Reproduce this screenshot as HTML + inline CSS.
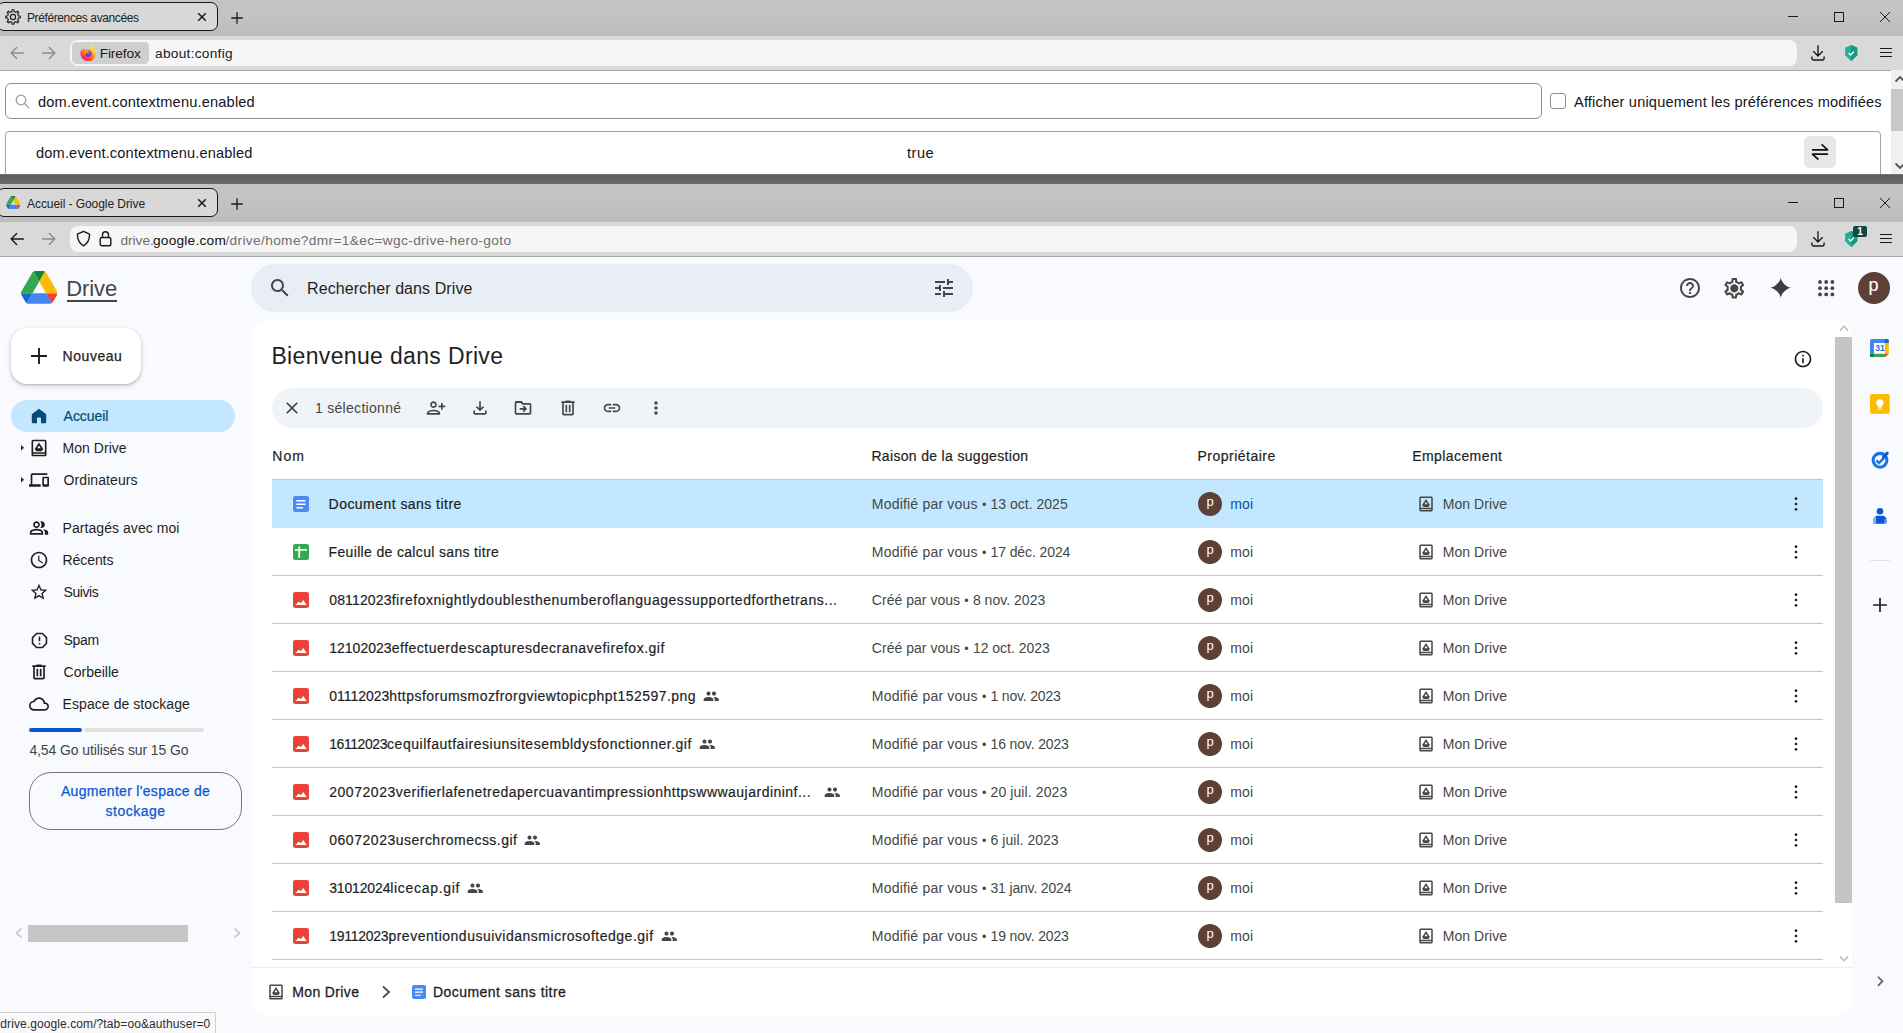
<!DOCTYPE html>
<html lang="fr"><head><meta charset="utf-8"><title>Accueil - Google Drive</title>
<style>
html,body{margin:0;padding:0;}
body{width:1903px;height:1033px;overflow:hidden;position:relative;background:#f8fafd;font-family:"Liberation Sans", sans-serif;}
.t{position:absolute;white-space:nowrap;}
.i{position:absolute;display:block;}
.b{position:absolute;box-sizing:border-box;}
</style></head>
<body>
<div class="b" style="left:0px;top:0px;width:1903px;height:36px;background:linear-gradient(#c5c5c5 0,#c3c3c3 40%,#bcbcbc 100%);"></div>
<div class="b" style="left:-3px;top:2px;width:221px;height:29px;background:#d8d8d8;border:1.5px solid #161616;border-radius:7px;"></div>
<svg class="i" style="left:5px;top:8.8px" width="16" height="16" viewBox="0 0 16 16"><path d="M6.88 2.61 L7.09 0.76 L8.91 0.76 L9.12 2.61 L11.02 3.40 L12.47 2.23 L13.77 3.53 L12.60 4.98 L13.39 6.88 L15.24 7.09 L15.24 8.91 L13.39 9.12 L12.60 11.02 L13.77 12.47 L12.47 13.77 L11.02 12.60 L9.12 13.39 L8.91 15.24 L7.09 15.24 L6.88 13.39 L4.98 12.60 L3.53 13.77 L2.23 12.47 L3.40 11.02 L2.61 9.12 L0.76 8.91 L0.76 7.09 L2.61 6.88 L3.40 4.98 L2.23 3.53 L3.53 2.23 L4.98 3.40Z" stroke="#222" stroke-width="1.200" fill="none" stroke-linejoin="round"/><circle cx="8" cy="8" r="2.600" stroke="#222" stroke-width="1.200" fill="none"/></svg>
<div class="t" style="left:27.00px;top:9.8px;font-size:12px;line-height:17px;color:#222;font-weight:400;letter-spacing:-0.390px;">Préférences avancées</div>
<svg class="i" style="left:197px;top:12px" width="10" height="10" viewBox="0 0 10 10"><path d="M1.2 1.2L8.8 8.8M8.8 1.2L1.2 8.8" stroke="#1a1a1a" stroke-width="1.5" fill="none"/></svg>
<svg class="i" style="left:229.5px;top:10.5px" width="14" height="14" viewBox="0 0 14 14"><path d="M7 1.200v11.600M1.200 7h11.600" stroke="#1a1a1a" stroke-width="1.300" fill="none"/></svg>
<div class="b" style="left:1788px;top:16px;width:10px;height:1px;background:#1a1a1a;"></div>
<div class="b" style="left:1834px;top:12px;width:10px;height:10px;border:1px solid #1a1a1a;"></div>
<svg class="i" style="left:1880px;top:12px" width="10" height="10" viewBox="0 0 10 10"><path d="M0 0L10 10M10 0L0 10" stroke="#1a1a1a" stroke-width="1" fill="none"/></svg>
<div class="b" style="left:0px;top:36px;width:1903px;height:35px;background:#d9d9d9;border-bottom:1px solid #a6a6a6;"></div>
<svg class="i" style="left:10px;top:46px" width="14" height="14" viewBox="0 0 14 14"><path d="M13.5 7H1.2M6.6 1.6L1.2 7 6.6 12.4" stroke="#8c8c8c" stroke-width="1.4" fill="none" stroke-linejoin="round" stroke-linecap="round"/></svg>
<svg class="i" style="left:42px;top:46px" width="14" height="14" viewBox="0 0 14 14"><path d="M0.5 7H12.8M7.4 1.6L12.8 7 7.4 12.400" stroke="#8c8c8c" stroke-width="1.4" fill="none" stroke-linejoin="round" stroke-linecap="round"/></svg>
<div class="b" style="left:70px;top:40px;width:1727px;height:26px;background:#f6f6f6;border-radius:8px;"></div>
<div class="b" style="left:72.2px;top:42px;width:76.6px;height:22px;background:#cfcfcf;border-radius:4.5px;"></div><svg class="i" style="left:79.7px;top:44.9px" width="16.3" height="16.3" viewBox="0 0 16 16"><defs><linearGradient id="fxa" x1="85%" y1="8%" x2="22%" y2="95%"><stop offset="0" stop-color="#fff44f"/><stop offset=".28" stop-color="#ffc22f"/><stop offset=".52" stop-color="#ff7d1a"/><stop offset=".78" stop-color="#ff3a4f"/><stop offset="1" stop-color="#ea237c"/></linearGradient><radialGradient id="fxb" cx="62%" cy="28%" r="85%"><stop offset="0" stop-color="#b44dff"/><stop offset=".55" stop-color="#6a3fe0"/><stop offset="1" stop-color="#4638cf"/></radialGradient></defs><path d="M10.400 0C12 1.500 13.200 2.600 14.400 4.600C16.200 7.600 15.800 11.400 13.400 13.800C10.600 16.600 5.900 16.700 3 14C0 11.200-.3 7 1.600 4C1.700 4.800 2 5.300 2.400 5.700C2.500 4.400 3 3.400 3.900 2.600C4.100 3.600 4.600 4.200 5.400 4.600C6.800 4.200 8.400 4.400 9.600 5.200C9 3.400 9.400 1.600 10.400 0Z" fill="url(#fxa)"/><circle cx="8.400" cy="8.500" r="3.100" fill="url(#fxb)"/><path d="M3.200 6.500C4.500 5.600 6.400 5.400 7.800 6.100C8.600 6.500 9 7.100 8.400 7.600C7.600 8.200 6.600 7.800 5.600 8.300C4.800 8.800 4.900 10 5.600 10.800C3.900 10.400 2.900 8.400 3.200 6.500Z" fill="#ff8f1c"/></svg><div class="t" style="left:99.70px;top:44.4px;font-size:13.7px;line-height:19px;color:#1a1a1a;font-weight:400;letter-spacing:-0.115px;">Firefox</div><div class="t" style="left:155.00px;top:44.4px;font-size:13.7px;line-height:19px;color:#1a1a1a;font-weight:400;letter-spacing:0.276px;">about:config</div>
<svg class="i" style="left:1810.5px;top:44.5px" width="14" height="16" viewBox="0 0 14 16"><path d="M7 0.700v10M2.600 6.600L7 11l4.400-4.400M0.900 11.800v1.300a1.900 1.900 0 0 0 1.900 1.900h8.400a1.900 1.900 0 0 0 1.900-1.900v-1.300" stroke="#1a1a1a" stroke-width="1.350" fill="none" stroke-linecap="round" stroke-linejoin="round"/></svg>
<svg class="i" style="left:1845.3px;top:45px" width="12.4" height="16.2" viewBox="0 0 12 16"><path d="M6 0L12 2.600V10.200L6 16 0 10.200V2.600z" fill="#20b094"/><path d="M6 0L12 2.600V10.200L6 16z" fill="#14977e"/><path d="M3.400 8l2 1.900 3.400-3.500" stroke="#fff" stroke-width="1.300" fill="none"/></svg>
<div class="b" style="left:1880px;top:47.95px;width:12px;height:1.5px;background:#1a1a1a;"></div>
<div class="b" style="left:1880px;top:51.95px;width:12px;height:1.5px;background:#1a1a1a;"></div>
<div class="b" style="left:1880px;top:55.95px;width:12px;height:1.5px;background:#1a1a1a;"></div>
<div class="b" style="left:0px;top:71px;width:1903px;height:103px;background:#fff;"></div>
<div class="b" style="left:5px;top:83px;width:1536.5px;height:36px;border:1px solid #8f8f93;border-radius:6px;background:#fff;"></div>
<svg class="i" style="left:15px;top:94px" width="15" height="15" viewBox="0 0 15 15"><circle cx="6" cy="6" r="4.800" stroke="#9a9aa3" stroke-width="1.300" fill="none"/><path d="M9.600 9.600L14 14" stroke="#9a9aa3" stroke-width="1.300"/></svg>
<div class="t" style="left:38.00px;top:91.6px;font-size:14.6px;line-height:20px;color:#15141a;font-weight:400;letter-spacing:0.177px;">dom.event.contextmenu.enabled</div>
<div class="b" style="left:1550px;top:93px;width:16px;height:16px;border:1px solid #8f8f9d;border-radius:3px;background:#fff;"></div>
<div class="t" style="left:1574.00px;top:91.6px;font-size:14.6px;line-height:20px;color:#15141a;font-weight:400;letter-spacing:0.175px;">Afficher uniquement les préférences modifiées</div>
<div class="b" style="left:5px;top:131px;width:1876px;height:60px;border:1px solid #a2a2a6;border-radius:4px;background:#fff;"></div>
<div class="t" style="left:36.00px;top:142.6px;font-size:14.6px;line-height:20px;color:#15141a;font-weight:400;letter-spacing:0.167px;">dom.event.contextmenu.enabled</div>
<div class="t" style="left:907.00px;top:142.6px;font-size:14.6px;line-height:20px;color:#15141a;font-weight:400;letter-spacing:0.490px;">true</div>
<div class="b" style="left:1804px;top:136px;width:32px;height:32px;background:#e7e7e9;border-radius:5.500px;"></div>
<svg class="i" style="left:1811px;top:144px" width="18" height="16" viewBox="0 0 18 16"><path d="M1 5.900H17.100M10.600 0.400L17 6.100M17.100 10.100H1M1.100 9.900L7.400 15.500" stroke="#111" stroke-width="1.700" fill="none"/></svg>
<div class="b" style="left:1891px;top:70px;width:12px;height:104px;background:#f0f0f0;"></div>
<div class="b" style="left:1891px;top:88.5px;width:12px;height:42.5px;background:#c8c8c8;"></div>
<svg class="i" style="left:1894.5px;top:74.5px" width="10" height="8" viewBox="0 0 10 8"><path d="M0.500 6.500L5 2l4.500 4.500" stroke="#505050" stroke-width="1.800" fill="none"/></svg>
<svg class="i" style="left:1894.5px;top:162.3px" width="10" height="8" viewBox="0 0 10 8"><path d="M0.500 1.500L5 6l4.500-4.500" stroke="#505050" stroke-width="1.800" fill="none"/></svg>
<div class="b" style="left:0px;top:173.5px;width:1903px;height:10.5px;background:linear-gradient(#8a8a8a 0,#5e5e5e 10%,#646464 50%,#6a6a6a 100%);"></div>
<div class="b" style="left:0px;top:184px;width:1903px;height:38px;background:linear-gradient(#c5c5c5 0,#c3c3c3 40%,#bcbcbc 100%);"></div>
<div class="b" style="left:-3px;top:188px;width:221px;height:29px;background:#d8d8d8;border:1.5px solid #161616;border-radius:7px;"></div>
<svg class="i" style="left:5.7px;top:196px" width="14.6" height="13.0378" viewBox="0 0 87.3 78"><path d="m6.600 66.850 3.850 6.650c.8 1.400 1.950 2.500 3.300 3.300l13.750-23.800h-27.500c0 1.550.4 3.100 1.200 4.500z" fill="#1967d2"/><path d="m43.650 25-13.750-23.800c-1.350.8-2.500 1.900-3.300 3.300l-25.400 44a9.060 9.060 0 0 0 -1.200 4.500h27.500z" fill="#34a853"/><path d="m73.550 76.800c1.350-.8 2.500-1.900 3.300-3.300l1.600-2.750 7.650-13.250c.8-1.400 1.200-2.950 1.200-4.500h-27.502l5.852 11.500z" fill="#ea4335"/><path d="m43.650 25 13.750-23.800c-1.350-.8-2.900-1.200-4.500-1.200h-18.500c-1.600 0-3.150.45-4.500 1.200z" fill="#188038"/><path d="m59.800 53h-32.300l-13.750 23.800c1.350.8 2.900 1.200 4.500 1.200h50.800c1.600 0 3.150-.45 4.500-1.200z" fill="#4285f4"/><path d="m73.400 26.500-12.700-22c-.8-1.400-1.950-2.500-3.300-3.300l-13.750 23.800 16.150 28h27.450c0-1.550-.4-3.100-1.200-4.500z" fill="#fbbc04"/></svg>
<div class="t" style="left:27.00px;top:195.8px;font-size:12px;line-height:17px;color:#222;font-weight:400;letter-spacing:-0.062px;">Accueil - Google Drive</div>
<svg class="i" style="left:197px;top:198px" width="10" height="10" viewBox="0 0 10 10"><path d="M1.2 1.2L8.8 8.8M8.8 1.2L1.2 8.8" stroke="#1a1a1a" stroke-width="1.5" fill="none"/></svg>
<svg class="i" style="left:229.5px;top:196.5px" width="14" height="14" viewBox="0 0 14 14"><path d="M7 1.200v11.600M1.200 7h11.600" stroke="#1a1a1a" stroke-width="1.300" fill="none"/></svg>
<div class="b" style="left:1788px;top:202px;width:10px;height:1px;background:#1a1a1a;"></div>
<div class="b" style="left:1834px;top:198px;width:10px;height:10px;border:1px solid #1a1a1a;"></div>
<svg class="i" style="left:1880px;top:198px" width="10" height="10" viewBox="0 0 10 10"><path d="M0 0L10 10M10 0L0 10" stroke="#1a1a1a" stroke-width="1" fill="none"/></svg>
<div class="b" style="left:0px;top:222px;width:1903px;height:35px;background:#d9d9d9;border-bottom:1px solid #a6a6a6;"></div>
<svg class="i" style="left:10px;top:232px" width="14" height="14" viewBox="0 0 14 14"><path d="M13.5 7H1.2M6.6 1.6L1.2 7 6.6 12.4" stroke="#1a1a1a" stroke-width="1.4" fill="none" stroke-linejoin="round" stroke-linecap="round"/></svg>
<svg class="i" style="left:42px;top:232px" width="14" height="14" viewBox="0 0 14 14"><path d="M0.5 7H12.8M7.4 1.6L12.8 7 7.4 12.400" stroke="#8c8c8c" stroke-width="1.4" fill="none" stroke-linejoin="round" stroke-linecap="round"/></svg>
<div class="b" style="left:70px;top:226px;width:1727px;height:26px;background:#f6f6f6;border-radius:8px;"></div>
<svg class="i" style="left:75.6px;top:230.4px" width="15" height="17" viewBox="0 0 15 17"><path d="M7.500 1.400L13.600 4.200C13.600 9.300 11.600 13.400 7.500 15.800C3.400 13.400 1.400 9.300 1.400 4.200z" stroke="#1a1a1a" stroke-width="1.400" fill="none" stroke-linejoin="round"/></svg><svg class="i" style="left:98.5px;top:230.3px" width="13" height="17" viewBox="0 0 13 17"><rect x="1.200" y="7.500" width="10.600" height="8.300" rx="1.800" stroke="#1a1a1a" stroke-width="1.400" fill="none"/><path d="M3.500 7.500V4.700a3 3 0 0 1 6 0v2.800" stroke="#1a1a1a" stroke-width="1.400" fill="none"/></svg><div class="t" style="left:120.40px;top:230.6px;font-size:13.7px;line-height:19px;color:#6e6e6e;font-weight:400;letter-spacing:-0.013px;">drive.</div><div class="t" style="left:153.00px;top:230.6px;font-size:13.7px;line-height:19px;color:#111;font-weight:400;letter-spacing:0.226px;">google.com</div><div class="t" style="left:225.40px;top:230.6px;font-size:13.7px;line-height:19px;color:#6e6e6e;font-weight:400;letter-spacing:0.359px;">/drive/home?dmr=1&amp;ec=wgc-drive-hero-goto</div>
<svg class="i" style="left:1810.5px;top:230.5px" width="14" height="16" viewBox="0 0 14 16"><path d="M7 0.700v10M2.600 6.600L7 11l4.400-4.400M0.900 11.800v1.300a1.900 1.900 0 0 0 1.900 1.900h8.400a1.900 1.900 0 0 0 1.900-1.900v-1.300" stroke="#1a1a1a" stroke-width="1.350" fill="none" stroke-linecap="round" stroke-linejoin="round"/></svg>
<svg class="i" style="left:1845.3px;top:231px" width="12.4" height="16.2" viewBox="0 0 12 16"><path d="M6 0L12 2.600V10.200L6 16 0 10.200V2.600z" fill="#20b094"/><path d="M6 0L12 2.600V10.200L6 16z" fill="#14977e"/><path d="M3.400 8l2 1.900 3.400-3.500" stroke="#fff" stroke-width="1.300" fill="none"/></svg>
<div class="b" style="left:1853px;top:226px;width:14px;height:11px;background:#0e4a41;border-radius:2px;"></div>
<div class="t" style="left:1857.30px;top:224.6px;font-size:10px;line-height:14px;color:#fff;font-weight:700;">1</div>
<div class="b" style="left:1880px;top:233.95px;width:12px;height:1.5px;background:#1a1a1a;"></div>
<div class="b" style="left:1880px;top:237.95px;width:12px;height:1.5px;background:#1a1a1a;"></div>
<div class="b" style="left:1880px;top:241.95px;width:12px;height:1.5px;background:#1a1a1a;"></div>
<div class="b" style="left:0px;top:257px;width:1903px;height:776px;background:#f8fafd;"></div>
<svg class="i" style="left:20.6px;top:271px" width="36.5" height="32.7" viewBox="0 0 87.3 78"><path d="m6.600 66.850 3.850 6.650c.8 1.400 1.950 2.500 3.300 3.300l13.750-23.800h-27.500c0 1.550.4 3.100 1.200 4.500z" fill="#1967d2"/><path d="m43.650 25-13.750-23.800c-1.350.8-2.500 1.900-3.300 3.300l-25.400 44a9.060 9.060 0 0 0 -1.200 4.500h27.500z" fill="#34a853"/><path d="m73.550 76.800c1.350-.8 2.500-1.900 3.300-3.300l1.600-2.750 7.650-13.250c.8-1.400 1.200-2.950 1.200-4.500h-27.502l5.852 11.500z" fill="#ea4335"/><path d="m43.650 25 13.750-23.800c-1.350-.8-2.900-1.200-4.500-1.200h-18.500c-1.600 0-3.150.45-4.500 1.200z" fill="#188038"/><path d="m59.800 53h-32.300l-13.750 23.800c1.350.8 2.900 1.200 4.500 1.200h50.800c1.600 0 3.150-.45 4.500-1.200z" fill="#4285f4"/><path d="m73.400 26.500-12.700-22c-.8-1.400-1.950-2.500-3.300-3.300l-13.750 23.800 16.150 28h27.450c0-1.550-.4-3.100-1.200-4.500z" fill="#fbbc04"/></svg>
<div class="t" style="left:66.30px;top:272.5px;font-size:22px;line-height:31px;color:#444746;font-weight:400;letter-spacing:-0.100px;">Drive</div>
<div class="b" style="left:67.3px;top:300px;width:49.7px;height:1.5px;background:#444746;"></div>
<div class="b" style="left:251px;top:264px;width:722px;height:48px;background:#e9eef6;border-radius:24px;"></div>
<svg class="i" style="left:267.8px;top:276.3px" width="24" height="24" viewBox="0 0 24 24" fill="#444746" ><path d="M15.5 14h-.79l-.28-.27C15.41 12.59 16 11.11 16 9.5 16 5.91 13.09 3 9.5 3S3 5.91 3 9.5 5.91 16 9.5 16c1.61 0 3.09-.59 4.23-1.57l.27.28v.79l5 4.99L20.49 19l-4.99-5zm-6 0C7.01 14 5 11.99 5 9.5S7.01 5 9.5 5 14 7.01 14 9.5 11.99 14 9.5 14z"/></svg>
<div class="t" style="left:307.00px;top:278.2px;font-size:16px;line-height:22px;color:#1f1f1f;font-weight:400;letter-spacing:0.089px;">Rechercher dans Drive</div>
<svg class="i" style="left:931.5px;top:276.0px" width="24" height="24" viewBox="0 0 24 24" fill="#444746" ><path d="M3 17v2h6v-2H3zM3 5v2h10V5H3zm10 16v-2h8v-2h-8v-2h-2v6h2zM7 9v2H3v2h4v2h2V9H7zm14 4v-2H11v2h10zm-6-4h2V7h4V5h-4V3h-2v6z"/></svg>
<svg class="i" style="left:1678.0px;top:276.0px" width="24" height="24" viewBox="0 0 24 24" fill="#444746" ><path d="M11 18h2v-2h-2v2zm1-16C6.48 2 2 6.48 2 12s4.48 10 10 10 10-4.48 10-10S17.52 2 12 2zm0 18c-4.41 0-8-3.59-8-8s3.590-8 8-8 8 3.590 8 8-3.590 8-8 8zm0-14c-2.210 0-4 1.790-4 4h2c0-1.100.900-2 2-2s2 .900 2 2c0 2-3 1.750-3 5h2c0-2.250 3-2.500 3-5 0-2.210-1.790-4-4-4z"/></svg>
<svg class="i" style="left:1721.7px;top:275.7px" width="24.6" height="24.6" viewBox="0 0 24 24" fill="#444746" ><path d="M19.43 12.98c.04-.32.07-.64.07-.98 0-.34-.03-.66-.07-.98l2.11-1.65c.19-.15.24-.42.12-.64l-2-3.46c-.09-.16-.26-.25-.44-.25-.06 0-.12.01-.17.03l-2.49 1c-.52-.4-1.08-.73-1.69-.98l-.38-2.65C14.46 2.18 14.25 2 14 2h-4c-.25 0-.46.18-.49.42l-.38 2.65c-.61.25-1.17.59-1.69.98l-2.49-1c-.06-.02-.12-.03-.18-.03-.17 0-.34.09-.43.25l-2 3.46c-.13.22-.07.49.12.64l2.11 1.65c-.04.32-.07.65-.07.98 0 .33.03.66.07.98l-2.11 1.65c-.19.15-.24.42-.12.64l2 3.46c.09.16.26.25.44.25.06 0 .12-.01.17-.03l2.49-1c.52.4 1.08.73 1.69.98l.38 2.65c.03.24.24.42.49.42h4c.25 0 .46-.18.49-.42l.38-2.650c.61-.25 1.17-.59 1.69-.98l2.49 1c.06.02.12.03.18.03.17 0 .34-.09.43-.25l2-3.46c.12-.22.07-.49-.12-.64l-2.11-1.65zm-1.980-1.710c.04.31.05.52.05.73 0 .21-.02.43-.05.73l-.14 1.130.89.700 1.080.840-.700 1.210-1.270-.510-1.040-.420-.900.680c-.430.320-.840.560-1.250.730l-1.060.430-.160 1.130-.200 1.350h-1.400l-.190-1.350-.160-1.130-1.060-.430c-.430-.180-.830-.410-1.230-.710l-.910-.700-1.060.430-1.270.510-.700-1.210 1.080-.840.890-.700-.140-1.130c-.030-.310-.050-.540-.050-.740s.020-.430.050-.730l.140-1.130-.890-.700-1.080-.840.700-1.210 1.270.510 1.040.420.900-.680c.430-.320.840-.560 1.250-.730l1.060-.430.160-1.130.200-1.350h1.390l.190 1.350.160 1.130 1.060.430c.430.180.830.410 1.230.710l.910.700 1.060-.430 1.270-.510.700 1.210-1.070.850-.890.700.140 1.130zM12 8c-2.210 0-4 1.790-4 4s1.790 4 4 4 4-1.790 4-4-1.790-4-4-4zm0 6c-1.100 0-2-.900-2-2s.900-2 2-2 2 .900 2 2-.900 2-2 2z"/></svg>
<div class="b" style="left:1731.1px;top:285.1px;width:5.8px;height:5.8px;background:#444746;border-radius:50%;"></div>
<svg class="i" style="left:1768.2px;top:275.2px" width="25.5" height="25.5" viewBox="0 0 24 24" fill="#3c3e3d" ><path d="M12 2C12 6.2 17.8 12 22 12C17.8 12 12 17.8 12 22C12 17.8 6.2 12 2 12C6.2 12 12 6.2 12 2z"/></svg>
<svg class="i" style="left:1817.7px;top:279.7px" width="17" height="17" viewBox="0 0 17 17"><circle cx="2.0" cy="2.0" r="1.900" fill="#444746"/><circle cx="2.0" cy="8.2" r="1.900" fill="#444746"/><circle cx="2.0" cy="14.4" r="1.900" fill="#444746"/><circle cx="8.2" cy="2.0" r="1.900" fill="#444746"/><circle cx="8.2" cy="8.2" r="1.900" fill="#444746"/><circle cx="8.2" cy="14.4" r="1.900" fill="#444746"/><circle cx="14.4" cy="2.0" r="1.900" fill="#444746"/><circle cx="14.4" cy="8.2" r="1.900" fill="#444746"/><circle cx="14.4" cy="14.4" r="1.900" fill="#444746"/></svg>
<div class="b" style="left:1858px;top:272px;width:32px;height:32px;background:#5d4037;border-radius:50%;"></div>
<div class="t" style="left:1868.60px;top:273.3px;font-size:18px;line-height:25px;color:#fff;font-weight:400;-webkit-text-stroke:0.1px #fff;">p</div>
<div class="b" style="left:11px;top:328px;width:129.8px;height:56px;background:#fff;border-radius:16px;box-shadow:0 1px 2px rgba(0,0,0,.22),0 2px 5px 1px rgba(0,0,0,.10);"></div>
<svg class="i" style="left:30px;top:347px" width="18" height="18" viewBox="0 0 18 18"><path d="M9 1v16M1 9h16" stroke="#1f1f1f" stroke-width="1.900" fill="none"/></svg>
<div class="t" style="left:62.60px;top:346.0px;font-size:14px;line-height:20px;color:#1f1f1f;font-weight:400;letter-spacing:0.541px;-webkit-text-stroke:0.25px #1f1f1f;">Nouveau</div>
<div class="b" style="left:11px;top:400px;width:224px;height:32px;background:#c2e7ff;border-radius:16px;"></div>
<svg class="i" style="left:31px;top:408px" width="16" height="16" viewBox="0 0 16 16"><path d="M8 0.800L0.800 6.300V14.200a1 1 0 0 0 1 1H6V10.200a.8.8 0 0 1 .8-.8h2.400a.8.800 0 0 1 .8.800V15.200h4.200a1 1 0 0 0 1-1V6.300z" fill="#054a78"/></svg>
<div class="t" style="left:63.60px;top:406.0px;font-size:14px;line-height:20px;color:#004a77;font-weight:400;letter-spacing:-0.053px;-webkit-text-stroke:0.2px #004a77;">Accueil</div>
<svg class="i" style="left:21.3px;top:445.3px" width="4" height="6" viewBox="0 0 4 6"><path d="M0 0l3 2.700L0 5.400z" fill="#1f1f1f"/></svg>
<svg class="i" style="left:29.2px;top:438.0px" width="20" height="20" viewBox="0 0 24 24" fill="#1f1f1f" ><path d="M19 2H5c-1.1 0-2 .9-2 2v16c0 1.1.9 2 2 2h14c1.1 0 2-.9 2-2V4c0-1.1-.9-2-2-2zm0 18H5v-1h14v1zm0-3H5V4h14v13zM12 5.300L6.800 13.300 8.900 16h6.200l2.100-2.700L12 5.300zm0 3.700l2.100 3.400h-4.200L12 9z"/></svg>
<div class="t" style="left:62.60px;top:438.0px;font-size:14px;line-height:20px;color:#1f1f1f;font-weight:400;letter-spacing:0.024px;">Mon Drive</div>
<svg class="i" style="left:21.3px;top:477.3px" width="4" height="6" viewBox="0 0 4 6"><path d="M0 0l3 2.700L0 5.400z" fill="#1f1f1f"/></svg>
<svg class="i" style="left:29.0px;top:470.0px" width="20" height="20" viewBox="0 0 24 24" fill="#1f1f1f" ><path d="M4 6h18V4H4c-1.1 0-2 .9-2 2v11H0v3h14v-3H4V6zm19 2h-6c-.55 0-1 .45-1 1v10c0 .55.45 1 1 1h6c.55 0 1-.45 1-1V9c0-.55-.45-1-1-1zm-1 9h-4v-7h4v7z"/></svg>
<div class="t" style="left:63.60px;top:470.0px;font-size:14px;line-height:20px;color:#1f1f1f;font-weight:400;letter-spacing:0.076px;">Ordinateurs</div>
<svg class="i" style="left:29.0px;top:518.0px" width="20" height="20" viewBox="0 0 24 24" fill="#1f1f1f" ><path d="M16.67 13.13C18.04 14.06 19 15.32 19 17v3h4v-3c0-2.18-3.57-3.47-6.33-3.87zM15 12c2.21 0 4-1.79 4-4s-1.79-4-4-4c-.47 0-.91.1-1.33.24C14.5 5.27 15 6.58 15 8s-.5 2.73-1.33 3.76c.42.14.86.24 1.33.24zm-6 0c2.21 0 4-1.79 4-4s-1.79-4-4-4-4 1.79-4 4 1.79 4 4 4zm0-6c1.1 0 2 .9 2 2s-.9 2-2 2-2-.9-2-2 .9-2 2-2zm0 7c-2.67 0-8 1.34-8 4v3h16v-3c0-2.66-5.33-4-8-4zm6 5H3v-.99C3.2 16.29 6.3 15 9 15s5.8 1.29 6 2v1z"/></svg>
<div class="t" style="left:62.60px;top:518.0px;font-size:14px;line-height:20px;color:#1f1f1f;font-weight:400;letter-spacing:0.054px;">Partagés avec moi</div>
<svg class="i" style="left:29.0px;top:550.0px" width="20" height="20" viewBox="0 0 24 24" fill="#1f1f1f" ><path d="M11.99 2C6.47 2 2 6.48 2 12s4.47 10 9.99 10C17.52 22 22 17.52 22 12S17.52 2 11.99 2zM12 20c-4.42 0-8-3.58-8-8s3.58-8 8-8 8 3.58 8 8-3.58 8-8 8zm.5-13H11v6l5.25 3.15.75-1.23-4.5-2.67z"/></svg>
<div class="t" style="left:62.60px;top:550.0px;font-size:14px;line-height:20px;color:#1f1f1f;font-weight:400;letter-spacing:-0.093px;">Récents</div>
<svg class="i" style="left:29.0px;top:582.0px" width="20" height="20" viewBox="0 0 24 24" fill="#1f1f1f" ><path d="M22 9.24l-7.19-.62L12 2 9.19 8.63 2 9.24l5.46 4.73L5.82 21 12 17.27 18.18 21l-1.63-7.03L22 9.24zM12 15.4l-3.76 2.27 1-4.28-3.32-2.88 4.38-.38L12 6.1l1.71 4.04 4.38.38-3.32 2.88 1 4.28L12 15.4z"/></svg>
<div class="t" style="left:63.60px;top:582.0px;font-size:14px;line-height:20px;color:#1f1f1f;font-weight:400;letter-spacing:-0.429px;">Suivis</div>
<svg class="i" style="left:29.5px;top:630.5px" width="19" height="19" viewBox="0 0 24 24"><path d="M8.300 3.200h7.400l5.100 5.100v7.400l-5.100 5.100H8.300l-5.100-5.100V8.300z" stroke="#1f1f1f" stroke-width="2" fill="none" stroke-linejoin="round"/><path d="M11 7h2v6h-2zM11 15h2v2h-2z" fill="#1f1f1f"/></svg>
<div class="t" style="left:63.60px;top:630.0px;font-size:14px;line-height:20px;color:#1f1f1f;font-weight:400;letter-spacing:-0.337px;">Spam</div>
<svg class="i" style="left:29.0px;top:662.0px" width="20" height="20" viewBox="0 0 24 24" fill="#1f1f1f" ><path d="M15 4V3H9v1H4v2h1v13c0 1.1.9 2 2 2h10c1.1 0 2-.9 2-2V6h1V4h-5zm2 15H7V6h10v13zM9 8h2v9H9zm4 0h2v9h-2z"/></svg>
<div class="t" style="left:63.60px;top:662.0px;font-size:14px;line-height:20px;color:#1f1f1f;font-weight:400;letter-spacing:0.005px;">Corbeille</div>
<svg class="i" style="left:29.0px;top:694.0px" width="20" height="20" viewBox="0 0 24 24" fill="#1f1f1f" ><path d="M19.35 10.04C18.67 6.59 15.64 4 12 4 9.11 4 6.6 5.64 5.35 8.04 2.34 8.36 0 10.91 0 14c0 3.31 2.69 6 6 6h13c2.76 0 5-2.24 5-5 0-2.64-2.05-4.78-4.65-4.96zM19 18H6c-2.21 0-4-1.79-4-4 0-2.05 1.53-3.76 3.56-3.97l1.07-.11.5-.95C8.08 7.14 9.94 6 12 6c2.62 0 4.88 1.86 5.39 4.43l.3 1.5 1.53.11c1.56.1 2.78 1.41 2.78 2.96 0 1.65-1.35 3-3 3z"/></svg>
<div class="t" style="left:62.60px;top:694.0px;font-size:14px;line-height:20px;color:#1f1f1f;font-weight:400;letter-spacing:0.065px;">Espace de stockage</div>
<div class="b" style="left:29px;top:728px;width:53px;height:4px;background:#0b57d0;border-radius:2px;"></div>
<div class="b" style="left:83.7px;top:728px;width:120.3px;height:4px;background:#e1e3e1;border-radius:2px;"></div>
<div class="t" style="left:29.40px;top:740.0px;font-size:14px;line-height:20px;color:#444746;font-weight:400;letter-spacing:-0.107px;">4,54 Go utilisés sur 15 Go</div>
<div class="b" style="left:29px;top:772px;width:213px;height:58px;border:1px solid #747775;border-radius:22px;"></div>
<div class="t" style="left:60.90px;top:780.8px;font-size:14px;line-height:20px;color:#0b57d0;font-weight:400;letter-spacing:0.311px;-webkit-text-stroke:0.25px #0b57d0;">Augmenter l&#x27;espace de</div>
<div class="t" style="left:105.60px;top:800.9px;font-size:14px;line-height:20px;color:#0b57d0;font-weight:400;letter-spacing:0.493px;-webkit-text-stroke:0.25px #0b57d0;">stockage</div>
<div class="b" style="left:28px;top:925px;width:160px;height:17px;background:#c6c6c6;"></div>
<svg class="i" style="left:15px;top:927px" width="8" height="12" viewBox="0 0 8 12"><path d="M6.500 1.500L1.500 6l5 4.500" stroke="#c4c4c4" stroke-width="1.600" fill="none"/></svg>
<svg class="i" style="left:233px;top:927px" width="8" height="12" viewBox="0 0 8 12"><path d="M1.500 1.500L6.500 6l-5 4.500" stroke="#c4c4c4" stroke-width="1.600" fill="none"/></svg>
<div class="b" style="left:252px;top:320px;width:1600px;height:697px;background:#fff;border-radius:16px;overflow:hidden;"><div class="b" style="left:1583px;top:17px;width:17px;height:566px;background:#c4c4c4;"></div><div class="b" style="left:0;top:647px;width:1600px;height:1px;background:#ececec;"></div></div>
<svg class="i" style="left:1838.5px;top:324px" width="10" height="8" viewBox="0 0 10 8"><path d="M0.900 6.600L5 2.300l4.100 4.300" stroke="#c6c6c6" stroke-width="1.900" fill="none"/></svg>
<svg class="i" style="left:1838.5px;top:954.5px" width="10" height="8" viewBox="0 0 10 8"><path d="M0.900 1.400L5 5.700l4.100-4.300" stroke="#c6c6c6" stroke-width="1.900" fill="none"/></svg>
<div class="t" style="left:271.40px;top:340.0px;font-size:23px;line-height:32px;color:#1f1f1f;font-weight:400;letter-spacing:0.346px;">Bienvenue dans Drive</div>
<svg class="i" style="left:1793.0px;top:349.0px" width="20" height="20" viewBox="0 0 24 24" fill="#1f1f1f" ><path d="M11 7h2v2h-2zm0 4h2v6h-2zm1-9C6.48 2 2 6.48 2 12s4.48 10 10 10 10-4.48 10-10S17.52 2 12 2zm0 18c-4.41 0-8-3.59-8-8s3.59-8 8-8 8 3.59 8 8-3.59 8-8 8z"/></svg>
<div class="b" style="left:272px;top:388px;width:1551px;height:40px;background:#f0f4f9;border-radius:20px;"></div>
<svg class="i" style="left:282.0px;top:398.2px" width="20" height="20" viewBox="0 0 24 24" fill="#444746" ><path d="M19 6.41L17.59 5 12 10.59 6.41 5 5 6.41 10.59 12 5 17.59 6.41 19 12 13.41 17.59 19 19 17.59 13.41 12z"/></svg>
<div class="t" style="left:314.90px;top:398.0px;font-size:14px;line-height:20px;color:#444746;font-weight:400;letter-spacing:0.307px;">1 sélectionné</div>
<svg class="i" style="left:426.3px;top:398.0px" width="20" height="20" viewBox="0 0 24 24" fill="#444746" ><path d="M9 12c2.21 0 4-1.79 4-4s-1.79-4-4-4-4 1.79-4 4 1.79 4 4 4zm0-6c1.1 0 2 .9 2 2s-.9 2-2 2-2-.9-2-2 .9-2 2-2zm0 8c-2.67 0-8 1.34-8 4v2h16v-2c0-2.66-5.33-4-8-4zm-6 4c.22-.72 3.31-2 6-2 2.7 0 5.8 1.29 6 2H3zM20 9V6h-2v3h-3v2h3v3h2v-3h3V9z"/></svg>
<svg class="i" style="left:469.7px;top:398.0px" width="20" height="20" viewBox="0 0 24 24" fill="#444746" ><path d="M18 15v3H6v-3H4v3c0 1.1.9 2 2 2h12c1.1 0 2-.9 2-2v-3h-2zm-1-4l-1.41-1.41L13 12.17V4h-2v8.17L8.41 9.59 7 11l5 5 5-5z"/></svg>
<svg class="i" style="left:512.8px;top:398.0px" width="20" height="20" viewBox="0 0 24 24" fill="#444746" ><path d="M20 6h-8l-2-2H4c-1.1 0-2 .9-2 2v12c0 1.1.9 2 2 2h16c1.1 0 2-.9 2-2V8c0-1.1-.9-2-2-2zm0 12H4V6h5.17l2 2H20v10zM8 14h5.17l-1.58 1.590L13 17l4-4-4-4-1.410 1.410L13.170 12H8z"/></svg>
<svg class="i" style="left:514.5px;top:401.3px" width="8.3" height="1.7" viewBox="0 0 8.3 1.7"><path d="M1.700 0h5l1.700 1.700H0C0 .8.800 0 1.700 0z" fill="#444746"/></svg>
<svg class="i" style="left:558.0px;top:398.0px" width="20" height="20" viewBox="0 0 24 24" fill="#444746" ><path d="M15 4V3H9v1H4v2h1v13c0 1.1.9 2 2 2h10c1.1 0 2-.9 2-2V6h1V4h-5zm2 15H7V6h10v13zM9 8h2v9H9zm4 0h2v9h-2z"/></svg>
<svg class="i" style="left:602.0px;top:398.2px" width="20" height="20" viewBox="0 0 24 24" fill="#444746" ><path d="M3.9 12c0-1.71 1.39-3.1 3.1-3.1h4V7H7c-2.76 0-5 2.24-5 5s2.24 5 5 5h4v-1.9H7c-1.71 0-3.1-1.39-3.1-3.1zM8 13h8v-2H8v2zm9-6h-4v1.9h4c1.71 0 3.1 1.39 3.1 3.1s-1.39 3.1-3.1 3.1h-4V17h4c2.76 0 5-2.24 5-5s-2.24-5-5-5z"/></svg>
<svg class="i" style="left:645.8px;top:398.0px" width="20" height="20" viewBox="0 0 24 24" fill="#444746" ><path d="M12 8c1.1 0 2-.9 2-2s-.9-2-2-2-2 .9-2 2 .9 2 2 2zm0 2c-1.1 0-2 .9-2 2s.9 2 2 2 2-.9 2-2-.9-2-2-2zm0 6c-1.1 0-2 .9-2 2s.9 2 2 2 2-.9 2-2-.9-2-2-2z"/></svg>
<div class="t" style="left:272.30px;top:446.4px;font-size:14px;line-height:20px;color:#1f1f1f;font-weight:400;letter-spacing:1.052px;-webkit-text-stroke:0.2px #1f1f1f;">Nom</div>
<div class="t" style="left:871.40px;top:446.4px;font-size:14px;line-height:20px;color:#1f1f1f;font-weight:400;letter-spacing:0.330px;-webkit-text-stroke:0.2px #1f1f1f;">Raison de la suggestion</div>
<div class="t" style="left:1197.40px;top:446.4px;font-size:14px;line-height:20px;color:#1f1f1f;font-weight:400;letter-spacing:0.502px;-webkit-text-stroke:0.2px #1f1f1f;">Propriétaire</div>
<div class="t" style="left:1412.20px;top:446.4px;font-size:14px;line-height:20px;color:#1f1f1f;font-weight:400;letter-spacing:0.420px;-webkit-text-stroke:0.2px #1f1f1f;">Emplacement</div>
<div class="b" style="left:272px;top:479px;width:1551px;height:1px;background:#c7c7c7;"></div>
<div class="b" style="left:272px;top:480px;width:1551px;height:48px;background:#c2e7ff;"></div>
<svg class="i" style="left:293px;top:496px" width="16" height="16" viewBox="0 0 16 16"><rect width="16" height="16" rx="2.200" fill="#4a8af4"/><path d="M3.400 4.700h9.200M3.400 8.200h9.200M3.400 11.700h6.500" stroke="#fff" stroke-width="1.400"/></svg>
<div class="t" style="left:328.60px;top:494.3px;font-size:14px;line-height:20px;color:#1f1f1f;font-weight:400;letter-spacing:0.455px;-webkit-text-stroke:0.2px #1f1f1f;">Document sans titre</div>
<div class="t" style="left:871.80px;top:494.3px;font-size:14px;line-height:20px;color:#444746;font-weight:400;"><span style="letter-spacing:0.199px;">Modifié par vous</span><span style="display:inline-block;width:12.8px;text-align:center;font-size:12.5px;position:relative;top:-0.3px;">•</span><span style="letter-spacing:0.011px;">13 oct. 2025</span></div>
<div class="b" style="left:1198px;top:492px;width:24px;height:24px;background:#5d4037;border-radius:50%;"></div>
<div class="t" style="left:1206.50px;top:493.3px;font-size:13px;line-height:18px;color:#fff;font-weight:400;">p</div>
<div class="t" style="left:1230.30px;top:494.3px;font-size:14px;line-height:20px;color:#0b50a0;font-weight:400;letter-spacing:0.076px;">moi</div>
<svg class="i" style="left:1416.8px;top:495.0px" width="18" height="18" viewBox="0 0 24 24" fill="#444746" ><path d="M19 2H5c-1.1 0-2 .9-2 2v16c0 1.1.9 2 2 2h14c1.1 0 2-.9 2-2V4c0-1.1-.9-2-2-2zm0 18H5v-1h14v1zm0-3H5V4h14v13zM12 5.300L6.800 13.300 8.900 16h6.200l2.100-2.700L12 5.300zm0 3.700l2.100 3.400h-4.200L12 9z"/></svg>
<div class="t" style="left:1442.70px;top:494.3px;font-size:14px;line-height:20px;color:#444746;font-weight:400;letter-spacing:0.062px;">Mon Drive</div>
<svg class="i" style="left:1794px;top:496px" width="4" height="16" viewBox="0 0 4 16"><circle cx="2" cy="2.700" r="1.350" fill="#1f1f1f"/><circle cx="2" cy="8" r="1.350" fill="#1f1f1f"/><circle cx="2" cy="13.300" r="1.350" fill="#1f1f1f"/></svg>
<div class="b" style="left:272px;top:575px;width:1551px;height:1px;background:#c7c7c7;"></div>
<svg class="i" style="left:293px;top:544px" width="16" height="16" viewBox="0 0 16 16"><rect width="16" height="16" rx="2.200" fill="#34a853"/><path d="M2 5.900h12M6.200 2.400v11.400" stroke="#fff" stroke-width="1.800"/></svg>
<div class="t" style="left:328.60px;top:542.3px;font-size:14px;line-height:20px;color:#1f1f1f;font-weight:400;letter-spacing:0.337px;-webkit-text-stroke:0.2px #1f1f1f;">Feuille de calcul sans titre</div>
<div class="t" style="left:871.80px;top:542.3px;font-size:14px;line-height:20px;color:#444746;font-weight:400;"><span style="letter-spacing:0.199px;">Modifié par vous</span><span style="display:inline-block;width:12.8px;text-align:center;font-size:12.5px;position:relative;top:-0.3px;">•</span><span style="letter-spacing:-0.097px;">17 déc. 2024</span></div>
<div class="b" style="left:1198px;top:540px;width:24px;height:24px;background:#5d4037;border-radius:50%;"></div>
<div class="t" style="left:1206.50px;top:541.3px;font-size:13px;line-height:18px;color:#fff;font-weight:400;">p</div>
<div class="t" style="left:1230.30px;top:542.3px;font-size:14px;line-height:20px;color:#444746;font-weight:400;letter-spacing:0.076px;">moi</div>
<svg class="i" style="left:1416.8px;top:543.0px" width="18" height="18" viewBox="0 0 24 24" fill="#444746" ><path d="M19 2H5c-1.1 0-2 .9-2 2v16c0 1.1.9 2 2 2h14c1.1 0 2-.9 2-2V4c0-1.1-.9-2-2-2zm0 18H5v-1h14v1zm0-3H5V4h14v13zM12 5.300L6.800 13.300 8.900 16h6.200l2.100-2.700L12 5.300zm0 3.700l2.100 3.400h-4.200L12 9z"/></svg>
<div class="t" style="left:1442.70px;top:542.3px;font-size:14px;line-height:20px;color:#444746;font-weight:400;letter-spacing:0.062px;">Mon Drive</div>
<svg class="i" style="left:1794px;top:544px" width="4" height="16" viewBox="0 0 4 16"><circle cx="2" cy="2.700" r="1.350" fill="#1f1f1f"/><circle cx="2" cy="8" r="1.350" fill="#1f1f1f"/><circle cx="2" cy="13.300" r="1.350" fill="#1f1f1f"/></svg>
<div class="b" style="left:272px;top:623px;width:1551px;height:1px;background:#c7c7c7;"></div>
<svg class="i" style="left:293px;top:592px" width="16" height="16" viewBox="0 0 16 16"><rect width="16" height="16" rx="2.200" fill="#ea4335"/><path d="M2.400 13L5.900 9.500 7.900 11.300 10.300 8 13.800 13z" fill="#fff"/></svg>
<div class="t" style="left:329.20px;top:590.3px;font-size:14px;line-height:20px;color:#1f1f1f;font-weight:400;-webkit-text-stroke:0.2px #1f1f1f;"><span style="letter-spacing:0.156px;">08112023</span><span style="letter-spacing:0.533px;">firefoxnightlydoublesthenumberoflanguagessupportedforthetrans...</span></div>
<div class="t" style="left:871.80px;top:590.3px;font-size:14px;line-height:20px;color:#444746;font-weight:400;"><span style="letter-spacing:0.028px;">Créé par vous</span><span style="display:inline-block;width:12.8px;text-align:center;font-size:12.5px;position:relative;top:-0.3px;">•</span><span style="letter-spacing:0.024px;">8 nov. 2023</span></div>
<div class="b" style="left:1198px;top:588px;width:24px;height:24px;background:#5d4037;border-radius:50%;"></div>
<div class="t" style="left:1206.50px;top:589.3px;font-size:13px;line-height:18px;color:#fff;font-weight:400;">p</div>
<div class="t" style="left:1230.30px;top:590.3px;font-size:14px;line-height:20px;color:#444746;font-weight:400;letter-spacing:0.076px;">moi</div>
<svg class="i" style="left:1416.8px;top:591.0px" width="18" height="18" viewBox="0 0 24 24" fill="#444746" ><path d="M19 2H5c-1.1 0-2 .9-2 2v16c0 1.1.9 2 2 2h14c1.1 0 2-.9 2-2V4c0-1.1-.9-2-2-2zm0 18H5v-1h14v1zm0-3H5V4h14v13zM12 5.300L6.800 13.300 8.900 16h6.200l2.100-2.700L12 5.300zm0 3.700l2.100 3.400h-4.200L12 9z"/></svg>
<div class="t" style="left:1442.70px;top:590.3px;font-size:14px;line-height:20px;color:#444746;font-weight:400;letter-spacing:0.062px;">Mon Drive</div>
<svg class="i" style="left:1794px;top:592px" width="4" height="16" viewBox="0 0 4 16"><circle cx="2" cy="2.700" r="1.350" fill="#1f1f1f"/><circle cx="2" cy="8" r="1.350" fill="#1f1f1f"/><circle cx="2" cy="13.300" r="1.350" fill="#1f1f1f"/></svg>
<div class="b" style="left:272px;top:671px;width:1551px;height:1px;background:#c7c7c7;"></div>
<svg class="i" style="left:293px;top:640px" width="16" height="16" viewBox="0 0 16 16"><rect width="16" height="16" rx="2.200" fill="#ea4335"/><path d="M2.400 13L5.900 9.500 7.900 11.300 10.300 8 13.800 13z" fill="#fff"/></svg>
<div class="t" style="left:329.20px;top:638.3px;font-size:14px;line-height:20px;color:#1f1f1f;font-weight:400;-webkit-text-stroke:0.2px #1f1f1f;"><span style="letter-spacing:0.025px;">12102023</span><span style="letter-spacing:0.513px;">effectuerdescapturesdecranavefirefox.gif</span></div>
<div class="t" style="left:871.80px;top:638.3px;font-size:14px;line-height:20px;color:#444746;font-weight:400;"><span style="letter-spacing:0.028px;">Créé par vous</span><span style="display:inline-block;width:12.8px;text-align:center;font-size:12.5px;position:relative;top:-0.3px;">•</span><span style="letter-spacing:-0.022px;">12 oct. 2023</span></div>
<div class="b" style="left:1198px;top:636px;width:24px;height:24px;background:#5d4037;border-radius:50%;"></div>
<div class="t" style="left:1206.50px;top:637.3px;font-size:13px;line-height:18px;color:#fff;font-weight:400;">p</div>
<div class="t" style="left:1230.30px;top:638.3px;font-size:14px;line-height:20px;color:#444746;font-weight:400;letter-spacing:0.076px;">moi</div>
<svg class="i" style="left:1416.8px;top:639.0px" width="18" height="18" viewBox="0 0 24 24" fill="#444746" ><path d="M19 2H5c-1.1 0-2 .9-2 2v16c0 1.1.9 2 2 2h14c1.1 0 2-.9 2-2V4c0-1.1-.9-2-2-2zm0 18H5v-1h14v1zm0-3H5V4h14v13zM12 5.300L6.800 13.300 8.900 16h6.200l2.100-2.700L12 5.300zm0 3.700l2.100 3.400h-4.200L12 9z"/></svg>
<div class="t" style="left:1442.70px;top:638.3px;font-size:14px;line-height:20px;color:#444746;font-weight:400;letter-spacing:0.062px;">Mon Drive</div>
<svg class="i" style="left:1794px;top:640px" width="4" height="16" viewBox="0 0 4 16"><circle cx="2" cy="2.700" r="1.350" fill="#1f1f1f"/><circle cx="2" cy="8" r="1.350" fill="#1f1f1f"/><circle cx="2" cy="13.300" r="1.350" fill="#1f1f1f"/></svg>
<div class="b" style="left:272px;top:719px;width:1551px;height:1px;background:#c7c7c7;"></div>
<svg class="i" style="left:293px;top:688px" width="16" height="16" viewBox="0 0 16 16"><rect width="16" height="16" rx="2.200" fill="#ea4335"/><path d="M2.400 13L5.900 9.500 7.900 11.300 10.300 8 13.800 13z" fill="#fff"/></svg>
<div class="t" style="left:329.20px;top:686.3px;font-size:14px;line-height:20px;color:#1f1f1f;font-weight:400;-webkit-text-stroke:0.2px #1f1f1f;"><span style="letter-spacing:-0.027px;">01112023</span><span style="letter-spacing:0.470px;">httpsforumsmozfrorgviewtopicphpt152597.png</span></div>
<svg class="i" style="left:703.1px;top:688.0px" width="16.5" height="16.5" viewBox="0 0 24 24" fill="#444746" ><path d="M16 11c1.66 0 2.99-1.34 2.99-3S17.66 5 16 5c-1.66 0-3 1.34-3 3s1.34 3 3 3zm-8 0c1.66 0 2.99-1.34 2.99-3S9.66 5 8 5C6.34 5 5 6.34 5 8s1.34 3 3 3zm0 2c-2.33 0-7 1.17-7 3.5V19h14v-2.5c0-2.33-4.67-3.5-7-3.5zm8 0c-.29 0-.62.02-.97.05 1.16.84 1.97 1.97 1.97 3.45V19h6v-2.5c0-2.33-4.67-3.5-7-3.5z"/></svg>
<div class="t" style="left:871.80px;top:686.3px;font-size:14px;line-height:20px;color:#444746;font-weight:400;"><span style="letter-spacing:0.199px;">Modifié par vous</span><span style="display:inline-block;width:12.8px;text-align:center;font-size:12.5px;position:relative;top:-0.3px;">•</span><span style="letter-spacing:-0.176px;">1 nov. 2023</span></div>
<div class="b" style="left:1198px;top:684px;width:24px;height:24px;background:#5d4037;border-radius:50%;"></div>
<div class="t" style="left:1206.50px;top:685.3px;font-size:13px;line-height:18px;color:#fff;font-weight:400;">p</div>
<div class="t" style="left:1230.30px;top:686.3px;font-size:14px;line-height:20px;color:#444746;font-weight:400;letter-spacing:0.076px;">moi</div>
<svg class="i" style="left:1416.8px;top:687.0px" width="18" height="18" viewBox="0 0 24 24" fill="#444746" ><path d="M19 2H5c-1.1 0-2 .9-2 2v16c0 1.1.9 2 2 2h14c1.1 0 2-.9 2-2V4c0-1.1-.9-2-2-2zm0 18H5v-1h14v1zm0-3H5V4h14v13zM12 5.300L6.800 13.300 8.900 16h6.200l2.100-2.700L12 5.300zm0 3.700l2.100 3.400h-4.200L12 9z"/></svg>
<div class="t" style="left:1442.70px;top:686.3px;font-size:14px;line-height:20px;color:#444746;font-weight:400;letter-spacing:0.062px;">Mon Drive</div>
<svg class="i" style="left:1794px;top:688px" width="4" height="16" viewBox="0 0 4 16"><circle cx="2" cy="2.700" r="1.350" fill="#1f1f1f"/><circle cx="2" cy="8" r="1.350" fill="#1f1f1f"/><circle cx="2" cy="13.300" r="1.350" fill="#1f1f1f"/></svg>
<div class="b" style="left:272px;top:767px;width:1551px;height:1px;background:#c7c7c7;"></div>
<svg class="i" style="left:293px;top:736px" width="16" height="16" viewBox="0 0 16 16"><rect width="16" height="16" rx="2.200" fill="#ea4335"/><path d="M2.400 13L5.900 9.500 7.900 11.300 10.300 8 13.800 13z" fill="#fff"/></svg>
<div class="t" style="left:329.20px;top:734.3px;font-size:14px;line-height:20px;color:#1f1f1f;font-weight:400;-webkit-text-stroke:0.2px #1f1f1f;"><span style="letter-spacing:-0.419px;">16112023</span><span style="letter-spacing:0.519px;">cequilfautfairesiunsitesembldysfonctionner.gif</span></div>
<svg class="i" style="left:698.9px;top:736.0px" width="16.5" height="16.5" viewBox="0 0 24 24" fill="#444746" ><path d="M16 11c1.66 0 2.99-1.34 2.99-3S17.66 5 16 5c-1.66 0-3 1.34-3 3s1.34 3 3 3zm-8 0c1.66 0 2.99-1.34 2.99-3S9.66 5 8 5C6.34 5 5 6.34 5 8s1.34 3 3 3zm0 2c-2.33 0-7 1.17-7 3.5V19h14v-2.5c0-2.33-4.67-3.5-7-3.5zm8 0c-.29 0-.62.02-.97.05 1.16.84 1.97 1.97 1.97 3.45V19h6v-2.5c0-2.33-4.67-3.5-7-3.5z"/></svg>
<div class="t" style="left:871.80px;top:734.3px;font-size:14px;line-height:20px;color:#444746;font-weight:400;"><span style="letter-spacing:0.199px;">Modifié par vous</span><span style="display:inline-block;width:12.8px;text-align:center;font-size:12.5px;position:relative;top:-0.3px;">•</span><span style="letter-spacing:-0.143px;">16 nov. 2023</span></div>
<div class="b" style="left:1198px;top:732px;width:24px;height:24px;background:#5d4037;border-radius:50%;"></div>
<div class="t" style="left:1206.50px;top:733.3px;font-size:13px;line-height:18px;color:#fff;font-weight:400;">p</div>
<div class="t" style="left:1230.30px;top:734.3px;font-size:14px;line-height:20px;color:#444746;font-weight:400;letter-spacing:0.076px;">moi</div>
<svg class="i" style="left:1416.8px;top:735.0px" width="18" height="18" viewBox="0 0 24 24" fill="#444746" ><path d="M19 2H5c-1.1 0-2 .9-2 2v16c0 1.1.9 2 2 2h14c1.1 0 2-.9 2-2V4c0-1.1-.9-2-2-2zm0 18H5v-1h14v1zm0-3H5V4h14v13zM12 5.300L6.800 13.300 8.900 16h6.200l2.100-2.700L12 5.300zm0 3.700l2.100 3.400h-4.200L12 9z"/></svg>
<div class="t" style="left:1442.70px;top:734.3px;font-size:14px;line-height:20px;color:#444746;font-weight:400;letter-spacing:0.062px;">Mon Drive</div>
<svg class="i" style="left:1794px;top:736px" width="4" height="16" viewBox="0 0 4 16"><circle cx="2" cy="2.700" r="1.350" fill="#1f1f1f"/><circle cx="2" cy="8" r="1.350" fill="#1f1f1f"/><circle cx="2" cy="13.300" r="1.350" fill="#1f1f1f"/></svg>
<div class="b" style="left:272px;top:815px;width:1551px;height:1px;background:#c7c7c7;"></div>
<svg class="i" style="left:293px;top:784px" width="16" height="16" viewBox="0 0 16 16"><rect width="16" height="16" rx="2.200" fill="#ea4335"/><path d="M2.400 13L5.900 9.500 7.900 11.300 10.300 8 13.800 13z" fill="#fff"/></svg>
<div class="t" style="left:329.20px;top:782.3px;font-size:14px;line-height:20px;color:#1f1f1f;font-weight:400;-webkit-text-stroke:0.2px #1f1f1f;"><span style="letter-spacing:0.538px;">20072023</span><span style="letter-spacing:0.481px;">verifierlafenetredapercuavantimpressionhttpswwwaujardininf...</span></div>
<svg class="i" style="left:823.6px;top:784.0px" width="16.5" height="16.5" viewBox="0 0 24 24" fill="#444746" ><path d="M16 11c1.66 0 2.99-1.34 2.99-3S17.66 5 16 5c-1.66 0-3 1.34-3 3s1.34 3 3 3zm-8 0c1.66 0 2.99-1.34 2.99-3S9.66 5 8 5C6.34 5 5 6.34 5 8s1.34 3 3 3zm0 2c-2.33 0-7 1.17-7 3.5V19h14v-2.5c0-2.33-4.67-3.5-7-3.5zm8 0c-.29 0-.62.02-.97.05 1.16.84 1.97 1.97 1.97 3.45V19h6v-2.5c0-2.33-4.67-3.5-7-3.5z"/></svg>
<div class="t" style="left:871.80px;top:782.3px;font-size:14px;line-height:20px;color:#444746;font-weight:400;"><span style="letter-spacing:0.199px;">Modifié par vous</span><span style="display:inline-block;width:12.8px;text-align:center;font-size:12.5px;position:relative;top:-0.3px;">•</span><span style="letter-spacing:0.099px;">20 juil. 2023</span></div>
<div class="b" style="left:1198px;top:780px;width:24px;height:24px;background:#5d4037;border-radius:50%;"></div>
<div class="t" style="left:1206.50px;top:781.3px;font-size:13px;line-height:18px;color:#fff;font-weight:400;">p</div>
<div class="t" style="left:1230.30px;top:782.3px;font-size:14px;line-height:20px;color:#444746;font-weight:400;letter-spacing:0.076px;">moi</div>
<svg class="i" style="left:1416.8px;top:783.0px" width="18" height="18" viewBox="0 0 24 24" fill="#444746" ><path d="M19 2H5c-1.1 0-2 .9-2 2v16c0 1.1.9 2 2 2h14c1.1 0 2-.9 2-2V4c0-1.1-.9-2-2-2zm0 18H5v-1h14v1zm0-3H5V4h14v13zM12 5.300L6.800 13.300 8.900 16h6.200l2.100-2.700L12 5.300zm0 3.700l2.100 3.400h-4.200L12 9z"/></svg>
<div class="t" style="left:1442.70px;top:782.3px;font-size:14px;line-height:20px;color:#444746;font-weight:400;letter-spacing:0.062px;">Mon Drive</div>
<svg class="i" style="left:1794px;top:784px" width="4" height="16" viewBox="0 0 4 16"><circle cx="2" cy="2.700" r="1.350" fill="#1f1f1f"/><circle cx="2" cy="8" r="1.350" fill="#1f1f1f"/><circle cx="2" cy="13.300" r="1.350" fill="#1f1f1f"/></svg>
<div class="b" style="left:272px;top:863px;width:1551px;height:1px;background:#c7c7c7;"></div>
<svg class="i" style="left:293px;top:832px" width="16" height="16" viewBox="0 0 16 16"><rect width="16" height="16" rx="2.200" fill="#ea4335"/><path d="M2.400 13L5.900 9.500 7.900 11.300 10.300 8 13.800 13z" fill="#fff"/></svg>
<div class="t" style="left:329.20px;top:830.3px;font-size:14px;line-height:20px;color:#1f1f1f;font-weight:400;-webkit-text-stroke:0.2px #1f1f1f;"><span style="letter-spacing:0.538px;">06072023</span><span style="letter-spacing:0.471px;">userchromecss.gif</span></div>
<svg class="i" style="left:524.4px;top:832.0px" width="16.5" height="16.5" viewBox="0 0 24 24" fill="#444746" ><path d="M16 11c1.66 0 2.99-1.34 2.99-3S17.66 5 16 5c-1.66 0-3 1.34-3 3s1.34 3 3 3zm-8 0c1.66 0 2.99-1.34 2.99-3S9.66 5 8 5C6.34 5 5 6.34 5 8s1.34 3 3 3zm0 2c-2.33 0-7 1.17-7 3.5V19h14v-2.5c0-2.33-4.67-3.5-7-3.5zm8 0c-.29 0-.62.02-.97.05 1.16.84 1.97 1.97 1.97 3.45V19h6v-2.5c0-2.33-4.67-3.5-7-3.5z"/></svg>
<div class="t" style="left:871.80px;top:830.3px;font-size:14px;line-height:20px;color:#444746;font-weight:400;"><span style="letter-spacing:0.199px;">Modifié par vous</span><span style="display:inline-block;width:12.8px;text-align:center;font-size:12.5px;position:relative;top:-0.3px;">•</span><span style="letter-spacing:0.040px;">6 juil. 2023</span></div>
<div class="b" style="left:1198px;top:828px;width:24px;height:24px;background:#5d4037;border-radius:50%;"></div>
<div class="t" style="left:1206.50px;top:829.3px;font-size:13px;line-height:18px;color:#fff;font-weight:400;">p</div>
<div class="t" style="left:1230.30px;top:830.3px;font-size:14px;line-height:20px;color:#444746;font-weight:400;letter-spacing:0.076px;">moi</div>
<svg class="i" style="left:1416.8px;top:831.0px" width="18" height="18" viewBox="0 0 24 24" fill="#444746" ><path d="M19 2H5c-1.1 0-2 .9-2 2v16c0 1.1.9 2 2 2h14c1.1 0 2-.9 2-2V4c0-1.1-.9-2-2-2zm0 18H5v-1h14v1zm0-3H5V4h14v13zM12 5.300L6.800 13.300 8.900 16h6.200l2.100-2.700L12 5.300zm0 3.700l2.100 3.400h-4.200L12 9z"/></svg>
<div class="t" style="left:1442.70px;top:830.3px;font-size:14px;line-height:20px;color:#444746;font-weight:400;letter-spacing:0.062px;">Mon Drive</div>
<svg class="i" style="left:1794px;top:832px" width="4" height="16" viewBox="0 0 4 16"><circle cx="2" cy="2.700" r="1.350" fill="#1f1f1f"/><circle cx="2" cy="8" r="1.350" fill="#1f1f1f"/><circle cx="2" cy="13.300" r="1.350" fill="#1f1f1f"/></svg>
<div class="b" style="left:272px;top:911px;width:1551px;height:1px;background:#c7c7c7;"></div>
<svg class="i" style="left:293px;top:880px" width="16" height="16" viewBox="0 0 16 16"><rect width="16" height="16" rx="2.200" fill="#ea4335"/><path d="M2.400 13L5.900 9.500 7.900 11.300 10.300 8 13.800 13z" fill="#fff"/></svg>
<div class="t" style="left:329.20px;top:878.3px;font-size:14px;line-height:20px;color:#1f1f1f;font-weight:400;-webkit-text-stroke:0.2px #1f1f1f;"><span style="letter-spacing:-0.150px;">31012024</span><span style="letter-spacing:0.685px;">licecap.gif</span></div>
<svg class="i" style="left:467.1px;top:880.0px" width="16.5" height="16.5" viewBox="0 0 24 24" fill="#444746" ><path d="M16 11c1.66 0 2.99-1.34 2.99-3S17.66 5 16 5c-1.66 0-3 1.34-3 3s1.34 3 3 3zm-8 0c1.66 0 2.99-1.34 2.99-3S9.66 5 8 5C6.34 5 5 6.34 5 8s1.34 3 3 3zm0 2c-2.33 0-7 1.17-7 3.5V19h14v-2.5c0-2.33-4.67-3.5-7-3.5zm8 0c-.29 0-.62.02-.97.05 1.16.84 1.97 1.97 1.97 3.45V19h6v-2.5c0-2.33-4.67-3.5-7-3.5z"/></svg>
<div class="t" style="left:871.80px;top:878.3px;font-size:14px;line-height:20px;color:#444746;font-weight:400;"><span style="letter-spacing:0.199px;">Modifié par vous</span><span style="display:inline-block;width:12.8px;text-align:center;font-size:12.5px;position:relative;top:-0.3px;">•</span><span style="letter-spacing:-0.172px;">31 janv. 2024</span></div>
<div class="b" style="left:1198px;top:876px;width:24px;height:24px;background:#5d4037;border-radius:50%;"></div>
<div class="t" style="left:1206.50px;top:877.3px;font-size:13px;line-height:18px;color:#fff;font-weight:400;">p</div>
<div class="t" style="left:1230.30px;top:878.3px;font-size:14px;line-height:20px;color:#444746;font-weight:400;letter-spacing:0.076px;">moi</div>
<svg class="i" style="left:1416.8px;top:879.0px" width="18" height="18" viewBox="0 0 24 24" fill="#444746" ><path d="M19 2H5c-1.1 0-2 .9-2 2v16c0 1.1.9 2 2 2h14c1.1 0 2-.9 2-2V4c0-1.1-.9-2-2-2zm0 18H5v-1h14v1zm0-3H5V4h14v13zM12 5.300L6.800 13.300 8.900 16h6.200l2.100-2.700L12 5.300zm0 3.700l2.100 3.400h-4.200L12 9z"/></svg>
<div class="t" style="left:1442.70px;top:878.3px;font-size:14px;line-height:20px;color:#444746;font-weight:400;letter-spacing:0.062px;">Mon Drive</div>
<svg class="i" style="left:1794px;top:880px" width="4" height="16" viewBox="0 0 4 16"><circle cx="2" cy="2.700" r="1.350" fill="#1f1f1f"/><circle cx="2" cy="8" r="1.350" fill="#1f1f1f"/><circle cx="2" cy="13.300" r="1.350" fill="#1f1f1f"/></svg>
<div class="b" style="left:272px;top:959px;width:1551px;height:1px;background:#c7c7c7;"></div>
<svg class="i" style="left:293px;top:928px" width="16" height="16" viewBox="0 0 16 16"><rect width="16" height="16" rx="2.200" fill="#ea4335"/><path d="M2.400 13L5.900 9.500 7.900 11.300 10.300 8 13.800 13z" fill="#fff"/></svg>
<div class="t" style="left:329.20px;top:926.3px;font-size:14px;line-height:20px;color:#1f1f1f;font-weight:400;-webkit-text-stroke:0.2px #1f1f1f;"><span style="letter-spacing:-0.256px;">19112023</span><span style="letter-spacing:0.507px;">preventiondusuividansmicrosoftedge.gif</span></div>
<svg class="i" style="left:660.6px;top:928.0px" width="16.5" height="16.5" viewBox="0 0 24 24" fill="#444746" ><path d="M16 11c1.66 0 2.99-1.34 2.99-3S17.66 5 16 5c-1.66 0-3 1.34-3 3s1.34 3 3 3zm-8 0c1.66 0 2.99-1.34 2.99-3S9.66 5 8 5C6.34 5 5 6.34 5 8s1.34 3 3 3zm0 2c-2.33 0-7 1.17-7 3.5V19h14v-2.5c0-2.33-4.67-3.5-7-3.5zm8 0c-.29 0-.62.02-.97.05 1.16.84 1.97 1.97 1.97 3.45V19h6v-2.5c0-2.33-4.67-3.5-7-3.5z"/></svg>
<div class="t" style="left:871.80px;top:926.3px;font-size:14px;line-height:20px;color:#444746;font-weight:400;"><span style="letter-spacing:0.199px;">Modifié par vous</span><span style="display:inline-block;width:12.8px;text-align:center;font-size:12.5px;position:relative;top:-0.3px;">•</span><span style="letter-spacing:-0.143px;">19 nov. 2023</span></div>
<div class="b" style="left:1198px;top:924px;width:24px;height:24px;background:#5d4037;border-radius:50%;"></div>
<div class="t" style="left:1206.50px;top:925.3px;font-size:13px;line-height:18px;color:#fff;font-weight:400;">p</div>
<div class="t" style="left:1230.30px;top:926.3px;font-size:14px;line-height:20px;color:#444746;font-weight:400;letter-spacing:0.076px;">moi</div>
<svg class="i" style="left:1416.8px;top:927.0px" width="18" height="18" viewBox="0 0 24 24" fill="#444746" ><path d="M19 2H5c-1.1 0-2 .9-2 2v16c0 1.1.9 2 2 2h14c1.1 0 2-.9 2-2V4c0-1.1-.9-2-2-2zm0 18H5v-1h14v1zm0-3H5V4h14v13zM12 5.300L6.800 13.300 8.900 16h6.200l2.100-2.700L12 5.300zm0 3.700l2.100 3.400h-4.200L12 9z"/></svg>
<div class="t" style="left:1442.70px;top:926.3px;font-size:14px;line-height:20px;color:#444746;font-weight:400;letter-spacing:0.062px;">Mon Drive</div>
<svg class="i" style="left:1794px;top:928px" width="4" height="16" viewBox="0 0 4 16"><circle cx="2" cy="2.700" r="1.350" fill="#1f1f1f"/><circle cx="2" cy="8" r="1.350" fill="#1f1f1f"/><circle cx="2" cy="13.300" r="1.350" fill="#1f1f1f"/></svg>
<svg class="i" style="left:267.1px;top:983.2px" width="18" height="18" viewBox="0 0 24 24" fill="#444746" ><path d="M19 2H5c-1.1 0-2 .9-2 2v16c0 1.1.9 2 2 2h14c1.1 0 2-.9 2-2V4c0-1.1-.9-2-2-2zm0 18H5v-1h14v1zm0-3H5V4h14v13zM12 5.300L6.800 13.300 8.900 16h6.200l2.100-2.700L12 5.300zm0 3.700l2.100 3.400h-4.200L12 9z"/></svg>
<div class="t" style="left:292.30px;top:982.0px;font-size:14px;line-height:20px;color:#1f1f1f;font-weight:400;letter-spacing:0.362px;-webkit-text-stroke:0.3px #1f1f1f;">Mon Drive</div>
<svg class="i" style="left:381px;top:985px" width="10" height="14" viewBox="0 0 10 14"><path d="M2 1.500L8 7l-6 5.500" stroke="#444746" stroke-width="1.700" fill="none"/></svg>
<svg class="i" style="left:412px;top:985px" width="14" height="14" viewBox="0 0 16 16"><rect width="16" height="16" rx="2.200" fill="#4a8af4"/><path d="M3.400 4.700h9.200M3.400 8.200h9.200M3.400 11.700h6.500" stroke="#fff" stroke-width="1.400"/></svg>
<div class="t" style="left:432.90px;top:982.0px;font-size:14px;line-height:20px;color:#1f1f1f;font-weight:400;letter-spacing:0.472px;-webkit-text-stroke:0.3px #1f1f1f;">Document sans titre</div>
<svg class="i" style="left:1870.2px;top:338.6px" width="18.8" height="18.8" viewBox="0 0 20 20"><path d="M2 0h16a2 2 0 0 1 2 2v2.300H0V2a2 2 0 0 1 2-2z" fill="#4285f4"/><rect x="0" y="4.300" width="4.300" height="11.400" fill="#4285f4"/><rect x="4.300" y="4.300" width="11.400" height="11.400" fill="#fff"/><path d="M0 15.700h15.700V20H2a2 2 0 0 1-2-2z" fill="#34a853"/><rect x="15.700" y="4.300" width="4.300" height="11.400" fill="#fbbc04"/><path d="M15.700 15.700h4.300l-4.300 4.300z" fill="#ea4335"/><path d="M0 15.700h4.300v4.300h-2.300a2 2 0 0 1-2-2z" fill="#188038"/><path d="M15.700 0h2.300a2 2 0 0 1 2 2v2.300h-4.300z" fill="#1967d2"/></svg>
<div class="t" style="left:1875.20px;top:342.0px;font-size:8.5px;line-height:12px;color:#1a73e8;font-weight:700;">31</div>
<svg class="i" style="left:1870px;top:394px" width="19.7" height="19.7" viewBox="0 0 20 20"><rect width="20" height="20" rx="2" fill="#fbbc04"/><circle cx="10" cy="9" r="3.700" fill="#fff"/><rect x="8" y="12.300" width="4" height="1.600" fill="#fff"/><rect x="8" y="14.800" width="4" height="1.200" fill="#fef3d0"/></svg>
<svg class="i" style="left:1870px;top:450px" width="20" height="20" viewBox="0 0 20 20"><circle cx="10" cy="10.300" r="6.900" stroke="#1a73e8" stroke-width="3.100" fill="none"/><path d="M6.300 10.300l2.700 2.700 5-5.200" stroke="#1a73e8" stroke-width="2.500" fill="none"/><path d="M13.500 7.300L17.200 3.200" stroke="#0b57d0" stroke-width="3" stroke-linecap="round"/></svg>
<svg class="i" style="left:1872px;top:507px" width="16" height="17" viewBox="0 0 16 17"><circle cx="8" cy="4.200" r="3.300" fill="#0b57d0"/><path d="M1.300 16.700v-3.700a4.300 4.300 0 0 1 4.300-4.300h4.800a4.300 4.300 0 0 1 4.300 4.300v1.700a2 2 0 0 1-2 2z" fill="#0b57d0"/><path d="M1.300 16.700v-3.700a4.300 4.300 0 0 1 2.700-4v7.700z" fill="#8ab4f8"/><path d="M12 12h2.700v4.700H12z" fill="#8ab4f8" opacity=".55"/></svg>
<div class="b" style="left:1870px;top:560px;width:20px;height:1px;background:#e3e3e3;"></div>
<svg class="i" style="left:1873px;top:597.5px" width="14" height="14" viewBox="0 0 14 14"><path d="M7 0v14M0 7h14" stroke="#1f1f1f" stroke-width="1.700" fill="none"/></svg>
<svg class="i" style="left:1869.5px;top:971.0px" width="20.5" height="20.5" viewBox="0 0 24 24" fill="#5f6368" ><path d="M10 6L8.59 7.41 13.17 12l-4.58 4.59L10 18l6-6z"/></svg>
<div class="b" style="left:-1px;top:1012px;width:217px;height:22px;background:#f9f9fb;border:1px solid #d2d2d6;"></div>
<div class="t" style="left:0.30px;top:1015.5px;font-size:12px;line-height:17px;color:#2b2b2b;font-weight:400;letter-spacing:0.093px;">drive.google.com/?tab=oo&amp;authuser=0</div>
</body></html>
